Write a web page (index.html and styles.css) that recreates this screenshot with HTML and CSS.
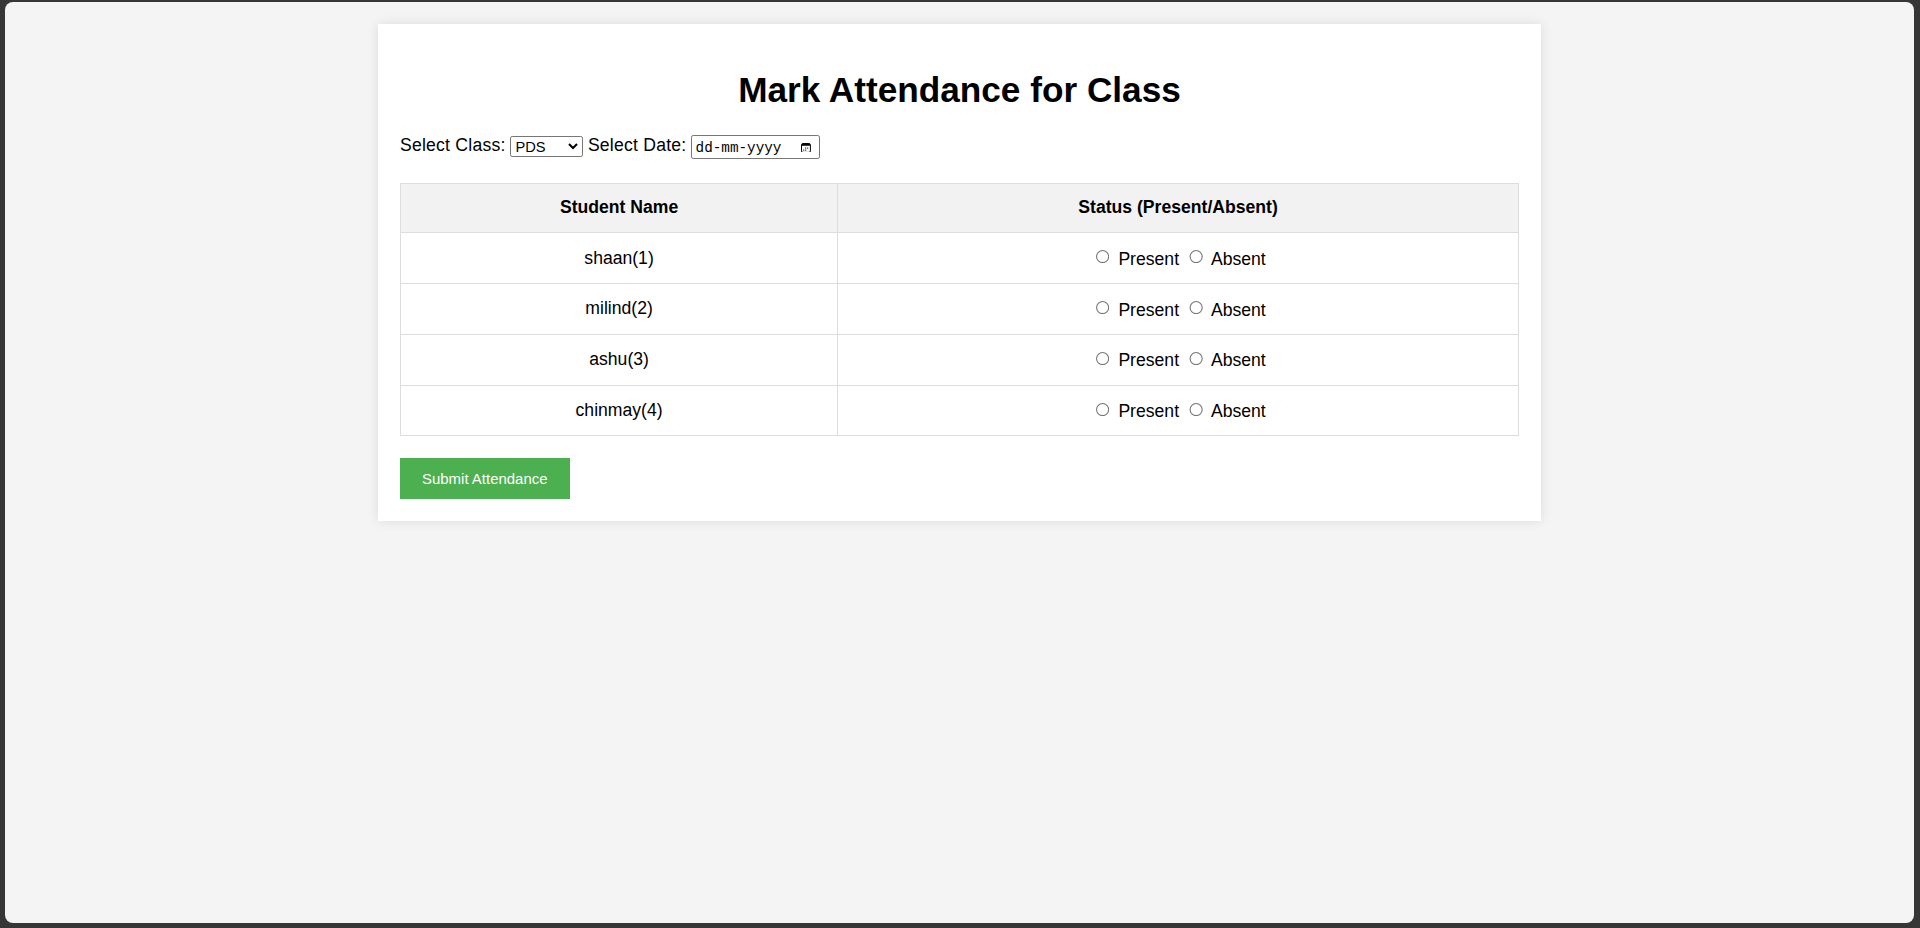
FILE: index.html
```html
<!DOCTYPE html>
<html lang="en">
<head>
<meta charset="utf-8">
<title>Mark Attendance</title>
<link rel="stylesheet" href="styles.css">
</head>
<body>
<div class="window">
  <div class="page">
    <div class="container">
      <h1 class="title">Mark Attendance for Class</h1>
      <div class="controls">
        <label class="label" for="class">Select Class:</label>
        <select id="class" class="class-select">
          <option>PDS</option>
        </select>
        <label class="label" for="date">Select Date:</label>
        <span class="date-input" id="date">
          <span class="date-text">dd-mm-yyyy</span>
          <svg class="date-icon" width="10" height="10" viewBox="0 0 10 10" aria-hidden="true">
            <rect x="0.5" y="0.5" width="9" height="9" rx="1.5" fill="none" stroke="#000" stroke-width="1"/>
            <rect x="1" y="1" width="8" height="1.8" fill="#000"/>
            <rect x="4.2" y="4.6" width="1.1" height="1.1" fill="#000"/>
            <rect x="6.2" y="4.6" width="1.1" height="1.1" fill="#000"/>
            <rect x="2.2" y="6.6" width="1.1" height="1.1" fill="#000"/>
            <rect x="4.2" y="6.6" width="1.1" height="1.1" fill="#000"/>
          </svg>
        </span>
      </div>
      <table class="attendance">
        <thead>
          <tr>
            <th class="col-name">Student Name</th>
            <th>Status (Present/Absent)</th>
          </tr>
        </thead>
        <tbody>
          <tr>
            <td>shaan(1)</td>
            <td><input type="radio" name="s1"> Present <input type="radio" name="s1"> Absent</td>
          </tr>
          <tr>
            <td>milind(2)</td>
            <td><input type="radio" name="s2"> Present <input type="radio" name="s2"> Absent</td>
          </tr>
          <tr>
            <td>ashu(3)</td>
            <td><input type="radio" name="s3"> Present <input type="radio" name="s3"> Absent</td>
          </tr>
          <tr>
            <td>chinmay(4)</td>
            <td><input type="radio" name="s4"> Present <input type="radio" name="s4"> Absent</td>
          </tr>
        </tbody>
      </table>
      <button class="submit" type="button">Submit Attendance</button>
    </div>
  </div>
</div>
</body>
</html>
```

FILE: styles.css
```css
html, body {
  margin: 0;
  height: 100%;
}

body {
  background: #363636;
  padding: 2px 6px 5px 5px;
  box-sizing: border-box;
}

.window {
  height: 100%;
  background: #f4f4f4;
  border-radius: 8px;
  overflow: hidden;
}

.page {
  zoom: 1.1;
  padding: 20px;
  font-family: "Liberation Sans", Arial, sans-serif;
  color: #000;
}

.container {
  width: 60%;
  margin: 0 auto;
  background: #fff;
  padding: 20px;
  box-shadow: 0 0 10px rgba(0, 0, 0, 0.1);
}

.title {
  text-align: center;
  font-size: 32px;
  margin: 21.4px 0;
}

.controls {
  font-size: 16px;
  padding: 2px 0;
}

.label {
  letter-spacing: 0.2px;
}

.class-select {
  width: 66px;
  height: 18.5px;
  font-family: "Liberation Sans", Arial, sans-serif;
  font-size: 13.33px;
  color: #000;
  border: 1px solid #767676;
  border-radius: 2px;
  background: #fff;
}

.date-input {
  display: inline-flex;
  align-items: center;
  box-sizing: border-box;
  width: 117px;
  height: 21.3px;
  padding: 1px 7px 0 3px;
  border: 1px solid #767676;
  border-radius: 2px;
  vertical-align: baseline;
}

.date-text {
  font-family: "Liberation Mono", "Courier New", monospace;
  font-size: 13px;
  color: #000;
}

.date-icon {
  margin-left: auto;
  width: 9px;
  height: 9px;
}

.attendance {
  width: 100%;
  border-collapse: collapse;
  margin-top: 20px;
  font-size: 16px;
}

.attendance th,
.attendance td {
  border: 1px solid #ddd;
  padding: 12.4px;
  text-align: center;
}

.attendance th {
  background: #f2f2f2;
}

.col-name {
  width: 39.1%;
}

.submit {
  margin-top: 20px;
  background: #4caf50;
  color: #fff;
  border: none;
  padding: 10.5px 20px;
  font-family: "Liberation Sans", Arial, sans-serif;
  font-size: 13.6px;
  cursor: pointer;
}
```
